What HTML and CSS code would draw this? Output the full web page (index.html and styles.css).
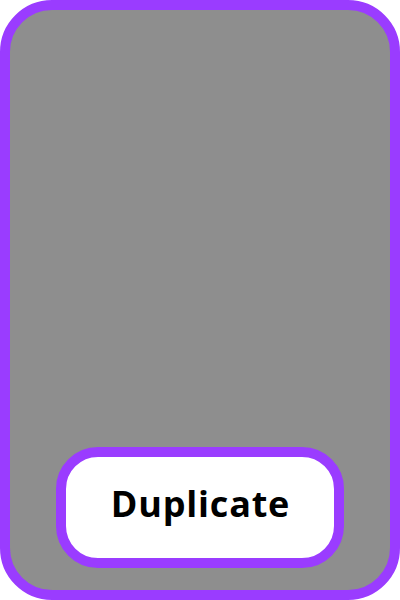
FILE: index.html
```html
<!DOCTYPE html>
<html>
<head>
<meta charset="utf-8">
<link rel="stylesheet" href="styles.css">
</head>
<body>
<div class="card">
  <button class="btn">Duplicate</button>
</div>
</body>
</html>
```
FILE: styles.css
```css
html, body { margin: 0; padding: 0; background: #ffffff; }
.card {
  width: 400px;
  height: 600px;
  box-sizing: border-box;
  border: 10px solid #9a3cff;
  border-radius: 52px;
  background: #8e8e8e;
  display: flex;
  flex-direction: column;
  justify-content: flex-end;
  align-items: center;
  padding-bottom: 22px;
}
.btn {
  width: 288px;
  height: 121px;
  box-sizing: border-box;
  border: 10px solid #9a3cff;
  border-radius: 42px;
  background: #ffffff;
  color: #000;
  font-family: "Open Sans", sans-serif;
  font-weight: 700;
  font-size: 36px;
  letter-spacing: 0.8px;
  padding: 0 0 8px 1px;
  margin: 0;
}
```
